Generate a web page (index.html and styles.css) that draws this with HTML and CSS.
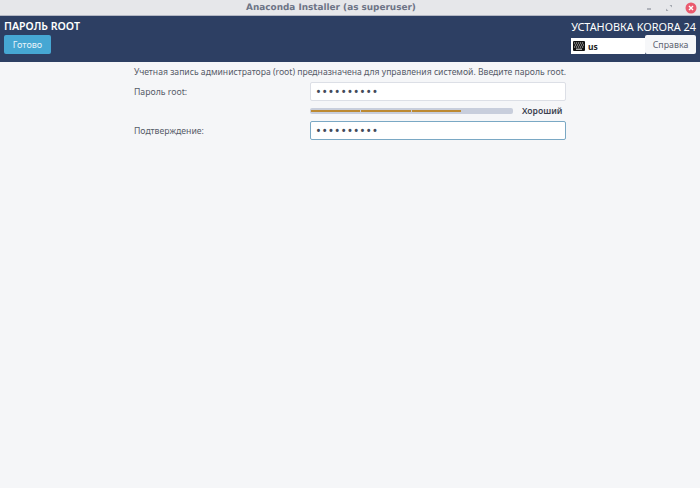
FILE: index.html
```html
<!DOCTYPE html>
<html lang="ru">
<head>
  <meta charset="utf-8" />
  <title>Anaconda Installer (as superuser)</title>
  <link rel="stylesheet" href="styles.css">
</head>
<body>
  <div class="titlebar">
    <span class="title-text">Anaconda Installer (as superuser)</span>
    <div class="win-buttons">
      <svg width="8" height="8" viewBox="0 0 8 8"><path d="M2 5h4" stroke="#8a8f9a" stroke-width="1.2"/></svg>
      <svg width="8" height="8" viewBox="0 0 8 8"><path d="M1 4.5V7h2.5zM7 3.5V1H4.5z" fill="#a4a8b0"/></svg>
      <svg width="12" height="12" viewBox="0 0 12 12"><circle cx="6" cy="6" r="5.5" fill="#ea5a6e"/><path d="M4 4l4 4M8 4l-4 4" stroke="#fff" stroke-width="1.4"/></svg>
    </div>
  </div>

  <header>
    <div class="head-left">
      <h1>ПАРОЛЬ ROOT</h1>
      <button class="done">Готово</button>
    </div>
    <div class="head-right">
      <div class="product">УСТАНОВКА KORORA 24</div>
      <div class="head-controls">
        <div class="layout">
          <svg width="12" height="10" viewBox="0 0 12 10"><rect width="12" height="10" rx="1" fill="#111"/><path d="M1 2h10M1 6h10" stroke="#fff" stroke-width="0.8" stroke-dasharray="1.2 0.8"/><path d="M1 4h10" stroke="#fff" stroke-width="0.8" stroke-dasharray="1.2 0.8" stroke-dashoffset="1"/><path d="M3 8.2h6" stroke="#fff" stroke-width="0.9"/></svg>
          <span>us</span>
        </div>
        <button class="help">Справка</button>
      </div>
    </div>
  </header>

  <main>
    <p class="intro">Учетная запись администратора (root) предназначена для управления системой. Введите пароль root.</p>
    <div class="form">
      <label>Пароль root:</label>
      <div class="entry">••••••••••</div>
      <div class="strength">
        <div class="bar"><div class="bar-fill"><i></i><i></i><i></i></div></div>
        <span class="strength-label">Хороший</span>
      </div>
      <label>Подтверждение:</label>
      <div class="entry focused">••••••••••</div>
    </div>
  </main>
</body>
</html>
```

FILE: styles.css
```css
html,
body {
  height: 100%;
  margin: 0;
  padding: 0;
  overflow: hidden;
  background: #f5f6f8;
  font-family: 'Noto Sans', 'DejaVu Sans', sans-serif;
}

.titlebar {
  display: flex;
  justify-content: center;
  align-items: center;
  position: relative;
  height: 15px;
  padding-right: 38px;
  background: #e6e7ea;
  border-bottom: 1px solid #b4b8c4;
}

.title-text {
  font-family: 'DejaVu Sans', sans-serif;
  font-size: 8.9px;
  font-weight: bold;
  color: #6d7486;
  text-rendering: geometricPrecision;
}

.win-buttons {
  position: absolute;
  top: 2px;
  right: 3px;
  display: flex;
  align-items: center;
  gap: 12px;
}

header {
  display: flex;
  justify-content: space-between;
  height: 46px;
  padding: 3px 4px 0;
  box-sizing: border-box;
  background: #2d3f63;
}

h1 {
  margin: 0 0 1px;
  font-size: 10.6px;
  line-height: 15px;
  font-weight: 600;
  color: #fff;
}

.done {
  display: block;
  width: 47px;
  height: 19px;
  padding: 0;
  border: 0;
  border-radius: 2px;
  background: #46a7d3;
  color: #e8f4fa;
  font: 9px 'Noto Sans', sans-serif;
}

.head-right {
  display: flex;
  flex-direction: column;
  align-items: flex-end;
}

.product {
  font-size: 10.9px;
  line-height: 15px;
  color: #fff;
  margin-bottom: 1px;
}

.head-controls {
  display: flex;
  width: 125px;
  height: 19px;
}

.layout {
  flex: 1;
  display: flex;
  align-items: center;
  gap: 3px;
  margin-top: 3px;
  padding-left: 2px;
  background: #fff;
  font-size: 8.5px;
  font-weight: bold;
  color: #222;
}

.help {
  width: 51px;
  height: 19px;
  padding: 0;
  border: 0;
  border-radius: 2px;
  background: #f6f7f9;
  color: #5c6270;
  font: 8.8px 'Noto Sans', sans-serif;
}

main {
  width: 432px;
  margin-left: 134px;
  padding-top: 4px;
}

.intro {
  margin: 0 0 3px;
  font-size: 8.62px;
  line-height: 13px;
  color: #555b68;
  white-space: nowrap;
}

.form {
  display: grid;
  grid-template-columns: 176px 1fr;
  align-items: center;
}

label {
  font-size: 8.7px;
  color: #555b68;
}

.entry {
  height: 17px;
  line-height: 16px;
  padding: 0 5px;
  background: #fff;
  border: 1px solid #dcdfe6;
  border-radius: 2px;
  color: #434a5a;
  font-size: 13px;
  letter-spacing: 1.4px;
}

.entry.focused {
  border-color: #7aa8c4;
}

.strength {
  grid-column: 2;
  display: flex;
  align-items: center;
  justify-content: space-between;
  height: 20px;
}

.bar {
  width: 203px;
  height: 6px;
  padding: 2px 1px;
  box-sizing: border-box;
  background: #c8cedc;
  border-radius: 2px;
}

.bar-fill {
  display: flex;
  gap: 1px;
  width: 150px;
  height: 2px;
}

.bar-fill i {
  flex: 1;
  background: #bd8a32;
}

.strength-label {
  width: 44px;
  font-size: 8.6px;
  font-weight: 600;
  color: #3c4250;
}
```
